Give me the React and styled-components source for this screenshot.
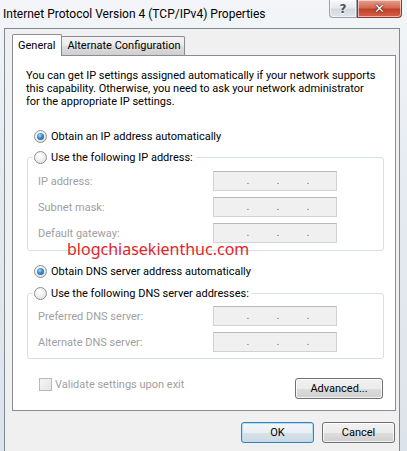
import styled, { createGlobalStyle } from 'styled-components'

const GlobalStyle = createGlobalStyle`
  html, body {
    margin: 0;
    padding: 0;
  }
  body {
    background: #e4e9ef;
    font-family: Roboto, "Noto Sans", "DejaVu Sans", sans-serif;
    font-size: 11px;
  }
`

const Window = styled.div`
  position: relative;
  width: 407px;
  height: 451px;
  overflow: hidden;
  display: flex;
  flex-direction: column;
  background: linear-gradient(180deg, #f3f5f8 0%, #e6ebf1 40%, #dde3ea 100%);
`
const TitleBar = styled.div`
  height: 28px;
  flex-shrink: 0;
  display: flex;
  align-items: flex-start;
`
const Title = styled.div`
  margin: 6px 0 0 3px;
  font-size: 12px;
  line-height: 16px;
  color: #000;
  white-space: nowrap;
`
const Captions = styled.div`
  margin-left: auto;
  margin-right: 5px;
  display: flex;
`
const CaptionButton = styled.div`
  width: ${p => p.$w}px;
  height: 18px;
  box-sizing: border-box;
  display: flex;
  align-items: center;
  justify-content: center;
  border: 1px solid ${p => (p.$close ? '#8c3a2b' : '#9aa1a9')};
  border-top: none;
  border-radius: ${p => (p.$close ? '0 0 4px 0' : '0 0 0 4px')};
  background: ${p =>
    p.$close
      ? 'linear-gradient(180deg, #e8a08e 0%, #d46a52 45%, #c2402a 55%, #d7624a 100%)'
      : 'linear-gradient(180deg, #f7f8fa 0%, #e7eaee 45%, #d3d8de 55%, #e1e5ea 100%)'};
  box-shadow: inset 0 0 0 1px rgba(255, 255, 255, 0.55);
  color: ${p => (p.$close ? '#fff' : '#4a4f55')};
  font-family: "DejaVu Sans", sans-serif;
  font-weight: bold;
  font-size: ${p => (p.$close ? 13 : 12)}px;
  text-shadow: ${p => (p.$close ? '0 0 2px #3a0d05, 0 0 1px #3a0d05' : '0 1px 0 #fff')};
`

const Client = styled.div`
  flex: 1;
  width: 396px;
  margin-left: 4px;
  box-sizing: border-box;
  background: #f0f0f0;
  border: 1px solid #7f8893;
  border-bottom: none;
`
const TabStrip = styled.div`
  display: flex;
  align-items: flex-end;
  height: 21px;
  margin-top: 5px;
  padding-left: 7px;
  position: relative;
  z-index: 1;
`
const Tab = styled.div`
  box-sizing: border-box;
  height: ${p => (p.$active ? 22 : 19)}px;
  margin-bottom: ${p => (p.$active ? -1 : 0)}px;
  margin-left: ${p => (p.$active ? 0 : -1)}px;
  padding: ${p => (p.$active ? '3px 6px 0 5px' : '1px 3px 0 5px')};
  border: 1px solid #898c95;
  border-bottom: none;
  border-radius: 2px 2px 0 0;
  background: ${p =>
    p.$active ? '#fff' : 'linear-gradient(180deg, #f2f2f2 0%, #ebebeb 50%, #dddddd 51%, #cfcfcf 100%)'};
  line-height: 16px;
  color: #000;
  white-space: nowrap;
`
const Panel = styled.div`
  width: 384px;
  height: 356px;
  margin-left: 7px;
  box-sizing: border-box;
  background: #fff;
  border: 1px solid #898c95;
  padding: 13px 12px 0 13px;
  display: flex;
  flex-direction: column;
`
const Intro = styled.p`
  margin: 0;
  line-height: 13px;
  color: #000;
  white-space: nowrap;
`
const RadioRow = styled.label`
  display: flex;
  align-items: center;
  gap: 4px;
  height: 16px;
  margin-top: ${p => p.$top || 0}px;
  padding-left: ${p => (p.$inset ? 8 : 0)}px;
  color: #000;
  white-space: nowrap;
`
const Radio = styled.span`
  position: relative;
  width: 13px;
  height: 13px;
  box-sizing: border-box;
  border-radius: 50%;
  border: 1px solid #8f8f8f;
  background: radial-gradient(circle at 40% 35%, #ffffff 0%, #f1f1f1 45%, #d4d4d4 100%);
  flex-shrink: 0;

  &::after {
    content: '';
    display: ${p => (p.$checked ? 'block' : 'none')};
    position: absolute;
    left: 2px;
    top: 2px;
    width: 7px;
    height: 7px;
    border-radius: 50%;
    background: radial-gradient(circle at 40% 35%, #a4dcf8 0%, #3c8fd0 40%, #1a4e8c 100%);
  }
`
const Group = styled.fieldset`
  margin: ${p => p.$top}px 0 0 1px;
  width: 357px;
  box-sizing: border-box;
  padding: ${p => p.$pad};
  border: 1px solid #d5dfe5;
  border-radius: 3px;
  display: flex;
  flex-direction: column;
  gap: 6px;
  min-width: 0;
`
const Legend = styled.legend`
  padding: 0 3px 0 1px;
  margin: 0;
`
const FieldRow = styled.div`
  display: flex;
  align-items: center;
  height: 20px;
  padding-left: 5px;
`
const FieldLabel = styled.span`
  width: 175px;
  line-height: 13px;
  color: #a0a0a0;
`
const IPBox = styled.div`
  width: 124px;
  height: 20px;
  box-sizing: border-box;
  display: flex;
  align-items: center;
  padding-left: 19px;
  border: 1px solid #d2d2d2;
  border-top-color: #b9b9b9;
  background: #f0f0f0;
`
const Dot = styled.span`
  width: 30px;
  text-align: center;
  color: #6d6d6d;
  line-height: 16px;
`
const BottomRow = styled.div`
  display: flex;
  justify-content: space-between;
  align-items: flex-start;
  margin-top: 19px;
`
const CheckRow = styled.label`
  display: flex;
  align-items: center;
  gap: 3px;
  height: 13px;
  padding-left: 13px;
  color: #a0a0a0;
  white-space: nowrap;
`
const CheckBox = styled.span`
  width: 13px;
  height: 13px;
  box-sizing: border-box;
  border: 1px solid #b8b8b8;
  background: linear-gradient(135deg, #f4f4f4 0%, #e6e6e6 100%);
`
const Button = styled.button`
  width: ${p => p.$w}px;
  height: 21px;
  box-sizing: border-box;
  padding: 0;
  font-family: inherit;
  font-size: 11px;
  color: #000;
  border-radius: 3px;
  border: 1px solid ${p => (p.$default ? '#3c7fb1' : '#707070')};
  background: ${p =>
    p.$default
      ? 'linear-gradient(180deg, #f2f7fa 0%, #e8eff4 50%, #d8e2ea 51%, #ccd8e2 100%)'
      : 'linear-gradient(180deg, #f2f2f2 0%, #ebebeb 50%, #dddddd 51%, #cfcfcf 100%)'};
  box-shadow: inset 0 0 0 1px ${p => (p.$default ? '#b4def5' : 'rgba(255,255,255,0.75)')};
`
const Footer = styled.div`
  display: flex;
  justify-content: flex-end;
  gap: 8px;
  padding: 11px 4px 0 0;
`
const Watermark = styled.div`
  position: absolute;
  left: 67px;
  top: 242px;
  font-family: "Noto Sans", sans-serif;
  font-size: 16px;
  line-height: 15px;
  color: #e0262a;
  white-space: nowrap;
`

const introLines = [
  'You can get IP settings assigned automatically if your network supports',
  'this capability. Otherwise, you need to ask your network administrator',
  'for the appropriate IP settings.',
]
const ipFields = ['IP address:', 'Subnet mask:', 'Default gateway:']
const dnsFields = ['Preferred DNS server:', 'Alternate DNS server:']

function AddressRow({ label }) {
  return (
    <FieldRow>
      <FieldLabel>{label}</FieldLabel>
      <IPBox>
        <Dot>.</Dot>
        <Dot>.</Dot>
        <Dot>.</Dot>
      </IPBox>
    </FieldRow>
  )
}

export default function App() {
  return (
    <Window>
      <GlobalStyle />
      <TitleBar>
        <Title>Internet Protocol Version 4 (TCP/IPv4) Properties</Title>
        <Captions>
          <CaptionButton $w={28}>?</CaptionButton>
          <CaptionButton $w={45} $close>✕</CaptionButton>
        </Captions>
      </TitleBar>
      <Client>
        <TabStrip>
          <Tab $active>General</Tab>
          <Tab>Alternate Configuration</Tab>
        </TabStrip>
        <Panel>
          <Intro>
            {introLines.map((l, i) => (
              <span key={i}>
                {l}
                {i < introLines.length - 1 && <br />}
              </span>
            ))}
          </Intro>
          <RadioRow $top={20} $inset>
            <Radio $checked />
            Obtain an IP address automatically
          </RadioRow>
          <Group $top={5} $pad="6px 0 7px 5px">
            <Legend>
              <RadioRow>
                <Radio />
                Use the following IP address:
              </RadioRow>
            </Legend>
            {ipFields.map(f => (
              <AddressRow key={f} label={f} />
            ))}
          </Group>
          <RadioRow $top={12} $inset>
            <Radio $checked />
            Obtain DNS server address automatically
          </RadioRow>
          <Group $top={6} $pad="5px 0 6px 5px">
            <Legend>
              <RadioRow>
                <Radio />
                Use the following DNS server addresses:
              </RadioRow>
            </Legend>
            {dnsFields.map(f => (
              <AddressRow key={f} label={f} />
            ))}
          </Group>
          <BottomRow>
            <CheckRow>
              <CheckBox />
              Validate settings upon exit
            </CheckRow>
            <Button $w={88}>Advanced...</Button>
          </BottomRow>
        </Panel>
        <Footer>
          <Button $w={73} $default>OK</Button>
          <Button $w={73}>Cancel</Button>
        </Footer>
      </Client>
      <Watermark>blogchiasekienthuc.com</Watermark>
    </Window>
  )
}
